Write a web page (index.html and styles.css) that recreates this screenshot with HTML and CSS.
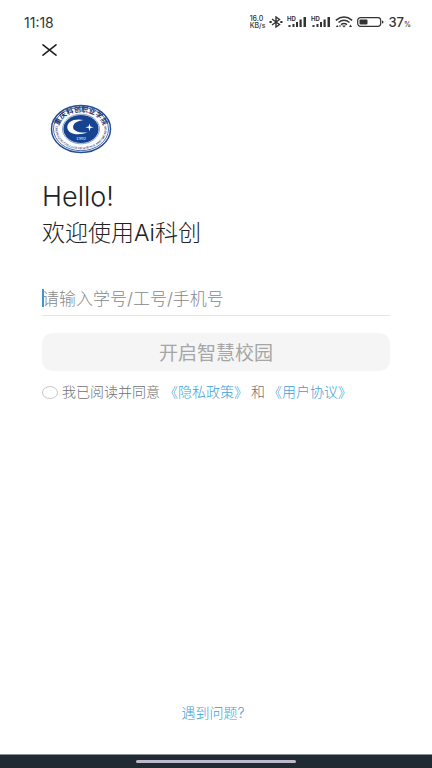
FILE: index.html
```html
<!DOCTYPE html>
<html lang="zh-CN">
<head>
<meta charset="utf-8">
<meta name="viewport" content="width=device-width, initial-scale=1">
<title>Ai科创</title>
<link rel="stylesheet" href="styles.css">
</head>
<body>
<header class="status">
  <span class="time">11:18</span>
  <div class="indicators">
    <span class="speed"><span>16.0</span><span>KB/s</span></span>
    <svg class="bluetooth" width="14" height="12" viewBox="0 0 14 12" fill="none" stroke="#333" stroke-width="1.4"><path d="M3 3l7.5 5.5L7 11V1l3.500 2.500L3 9"/><path d="M.5 6h2.200M11.300 6h2.200" stroke-width="1.800"/></svg>
    <svg class="signal" width="20" height="12" viewBox="0 0 20 12" fill="#333"><text x="0" y="5" class="hd">HD</text><path d="M1.500 9h2v2h-2zM5.500 8h2v3h-2zM9 6h2v5H9zM12.500 3.500h2.200V11h-2.200zM16.500 1h2.500v10h-2.500z"/></svg>
    <svg class="signal" width="20" height="12" viewBox="0 0 20 12" fill="#333"><text x="0" y="5" class="hd">HD</text><path d="M1.500 9h2v2h-2zM5.500 8h2v3h-2zM9 6h2v5H9zM12.500 3.500h2.200V11h-2.200zM16.500 1h2.500v10h-2.500z"/></svg>
    <svg class="wifi" width="18" height="12" viewBox="0 0 18 12" fill="none" stroke="#333" stroke-width="1.500"><path d="M.8 4.300Q9-2.300 17.200 4.300M3.500 6.500Q9 2.200 14.500 6.500M6 8.600Q9 6.400 12 8.600"/><path d="M7 9.400h4L9 11.600z" fill="#333" stroke="none"/><path d="M.8 11l1.400-2 1.400 2zM3.800 9.500l1.200 1.700 1.200-1.700zM14 11l1.500-2.500L17 11z" fill="#333" stroke="none"/></svg>
    <svg class="battery" width="27" height="10" viewBox="0 0 27 10"><rect x=".7" y=".7" width="23" height="8.600" rx="2.800" fill="none" stroke="#333" stroke-width="1.200"/><rect x="2.500" y="2.400" width="8" height="5.200" rx="1" fill="#333"/><path d="M25 3.500q1.500 0 1.500 1.500T25 6.500z" fill="#333"/></svg>
    <span class="percent">37<small>%</small></span>
  </div>
</header>

<main class="page">
  <button class="close" type="button" aria-label="关闭">
    <svg width="15" height="12" viewBox="0 0 15 12" stroke="#1c1c1c" stroke-width="1.500" stroke-linecap="round"><path d="M1 .8l13 10.400M14 .8L1 11.200"/></svg>
  </button>

  <svg class="logo" width="62" height="50" viewBox="0 0 62 50" role="img" aria-label="重庆科创职业学院">
    <defs>
      <path id="top-arc" d="M10 31A22.500 17 0 1 1 52 31"/>
      <path id="bottom-arc" d="M5.800 22A25.500 20.200 0 1 0 56.200 22"/>
    </defs>
    <ellipse cx="31" cy="25" rx="29.500" ry="23.500" fill="#fff" stroke="#244b94" stroke-width="1.500"/>
    <ellipse cx="31" cy="25" rx="27.500" ry="21.700" fill="none" stroke="#244b94" stroke-width=".8"/>
    <ellipse cx="31" cy="25" rx="18.500" ry="14.800" fill="#fff" stroke="#3e62a4" stroke-width=".6"/>
    <ellipse cx="31" cy="25" rx="17.600" ry="14" fill="#164292"/>
    <path d="M33.500 16C24 14 17 18 17.300 23.500C17.700 29.500 27 32.500 37.500 28.300C29.500 29.300 23.300 27.300 23.100 23.300C23 19.500 27 17 33.500 16z" fill="#fff"/>
    <path d="M39.500 19.500l.9 3 3.300.8-3.300.8-.9 3.200-.9-3.200-3.300-.8 3.300-.8z" fill="#fff"/>
    <text x="31" y="36" text-anchor="middle" class="logo-year">1992</text>
    <text class="logo-name" text-anchor="middle"><textPath href="#top-arc" startOffset="50%">重庆科创职业学院</textPath></text>
    <text class="logo-latin" text-anchor="middle"><textPath href="#bottom-arc" startOffset="50%">CHONGQING COLLEGE OF SCIENCE AND CREATION</textPath></text>
  </svg>

  <h1 class="hello">Hello!</h1>
  <p class="welcome">欢迎使用Ai科创</p>

  <form class="login">
    <div class="field">
      <input type="text" aria-label="账号" placeholder="请输入学号/工号/手机号">
    </div>
    <button class="submit" type="button">开启智慧校园</button>
    <div class="agreement">
      <input type="checkbox" id="agree">
      <label for="agree">我已阅读并同意</label>
      <p class="terms"><a href="#">《隐私政策》</a><span>和</span><a href="#">《用户协议》</a></p>
    </div>
  </form>

  <a class="help" href="#">遇到问题?</a>
</main>

<footer class="navbar"><span class="handle"></span></footer>
</body>
</html>
```

FILE: styles.css
```css
* {
  box-sizing: border-box;
}

body {
  display: flex;
  flex-direction: column;
  min-height: 100vh;
  margin: 0;
  background: #fff;
  color: #222;
  font-family: Inter, "Noto Sans CJK SC", sans-serif;
  font-weight: 300;
}

h1,
p {
  margin: 0;
}

a {
  color: #3e9fd6;
  text-decoration: none;
}

svg {
  display: block;
  flex: none;
}

.status {
  display: flex;
  align-items: center;
  justify-content: space-between;
  height: 20px;
  margin-top: 12px;
  padding: 0 21px 0 24px;
  color: #333;
  font-weight: 500;
}

.time {
  font-size: 14px;
  font-weight: 400;
}

.indicators {
  display: flex;
  align-items: center;
  gap: 4px;
}

.speed {
  display: flex;
  flex-direction: column;
  font-size: 7px;
  line-height: 7px;
}

.hd {
  font-size: 6px;
  font-weight: 700;
}

.percent {
  font-size: 13px;
}

.percent small {
  font-size: 7px;
}

.page {
  display: flex;
  flex: 1;
  flex-direction: column;
  padding: 8px 42px 32px;
}

.close {
  align-self: flex-start;
  padding: 4px 0;
  border: 0;
  background: none;
}

.logo {
  margin: 44px 0 0 8px;
}

.logo-name {
  fill: #17326e;
  font-family: "Noto Sans CJK SC", sans-serif;
  font-size: 7px;
  font-weight: 700;
}

.logo-latin {
  fill: #17326e;
  font-family: "Liberation Serif", serif;
  font-size: 3px;
  font-weight: 700;
}

.logo-year {
  fill: #fff;
  font-family: "Liberation Serif", serif;
  font-size: 5px;
}

.hello {
  margin-top: 25px;
  font-size: 27px;
  font-weight: 300;
  line-height: 36px;
}

.welcome {
  font-size: 23px;
  line-height: 36px;
}

.login {
  margin-top: 31px;
}

.field {
  position: relative;
  border-bottom: 1px solid #e3e5e8;
}

.field::before {
  position: absolute;
  top: 7px;
  left: 0;
  width: 2px;
  height: 18px;
  background: #3c96d2;
  content: "";
}

.field input {
  display: block;
  width: 100%;
  height: 33px;
  padding: 0;
  border: 0;
  outline: 0;
  background: none;
  font: inherit;
  font-size: 17px;
}

.field input::placeholder {
  color: #85888c;
  opacity: 1;
}

.submit {
  display: block;
  width: 100%;
  height: 38px;
  margin-top: 17px;
  padding: 0 0 2px;
  border: 0;
  border-radius: 10px;
  background: #f5f5f5;
  color: #a6a6a6;
  font: inherit;
  font-size: 19px;
  font-weight: 400;
}

.agreement {
  display: flex;
  align-items: center;
  gap: 4px;
  margin-top: 11px;
  color: #707070;
  font-size: 14px;
  line-height: 20px;
}

.agreement input {
  width: 16px;
  height: 13px;
  margin: 0;
  border: 1px solid #c8c8c8;
  border-radius: 50%;
  appearance: none;
}

.agreement input:checked {
  background: #3e9fd6;
}

.terms {
  display: flex;
  gap: 3px;
}

.help {
  align-self: center;
  margin-top: auto;
  padding-right: 6px;
  font-size: 14px;
  line-height: 18px;
}

.navbar {
  display: flex;
  justify-content: center;
  height: 14px;
  padding-top: 5px;
  border-top: 1px solid #8b9196;
  background: #202a33;
}

.handle {
  width: 37%;
  height: 3px;
  border-radius: 2px;
  background: #bdb8cb;
}
```
